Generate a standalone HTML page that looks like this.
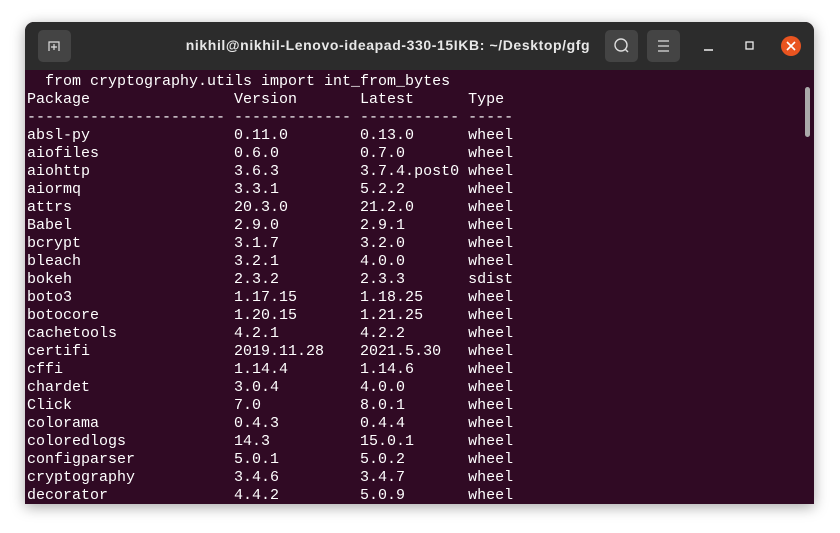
<!DOCTYPE html>
<html><head><style>
html,body{margin:0;padding:0;width:840px;height:533px;background:#fff;overflow:hidden}
.win{position:absolute;left:25px;top:22px;width:789px;height:482px;border-radius:9px 9px 0 0;overflow:hidden;box-shadow:0 3px 14px rgba(0,0,0,.35);background:#300a24}
.tb{position:absolute;left:0;top:0;width:100%;height:48px;background:#2c2c2c}
.btn{position:absolute;top:8px;width:33px;height:32px;border-radius:5px;background:#444}
.title{position:absolute;left:145px;width:436px;top:15px;text-align:center;color:#e8e8e8;font:bold 14px "Liberation Sans",sans-serif;letter-spacing:0.6px;white-space:nowrap}
pre{position:absolute;left:2px;top:51px;margin:0;font:15px/18px "Liberation Mono",monospace;color:#fff;letter-spacing:0}
.sb{position:absolute;left:780px;top:65px;width:5px;height:50px;border-radius:3px;background:#aaa}
</style></head><body>
<div class="win">
<div class="tb">
<div class="btn" style="left:13px"><svg width="33" height="32"><path d="M11 21V12h10v9M16 14v6M13 17h6" fill="none" stroke="#ddd" stroke-width="1.2"/></svg></div>
<div class="title">nikhil@nikhil-Lenovo-ideapad-330-15IKB: ~/Desktop/gfg</div>
<div class="btn" style="left:580px"><svg width="33" height="32"><circle cx="16" cy="15" r="6" fill="none" stroke="#ddd" stroke-width="1.4"/><path d="M20 19l3 3" stroke="#ddd" stroke-width="1.4"/></svg></div>
<div class="btn" style="left:622px"><svg width="33" height="32"><path d="M11 11h11M11 16h11M11 21h11" stroke="#ddd" stroke-width="1.2"/></svg></div>
<svg style="position:absolute;left:676px;top:14px" width="110" height="22"><path d="M3 14h9" stroke="#eee" stroke-width="1.5"/><rect x="45" y="6" width="7" height="7" fill="none" stroke="#eee" stroke-width="1.3"/><circle cx="90" cy="10" r="10" fill="#e95420"/><path d="M86 6l8 8M94 6l-8 8" stroke="#fff" stroke-width="1.6"/></svg>
</div>
<pre>  from cryptography.utils import int_from_bytes
Package                Version       Latest      Type
---------------------- ------------- ----------- -----
absl-py                0.11.0        0.13.0      wheel
aiofiles               0.6.0         0.7.0       wheel
aiohttp                3.6.3         3.7.4.post0 wheel
aiormq                 3.3.1         5.2.2       wheel
attrs                  20.3.0        21.2.0      wheel
Babel                  2.9.0         2.9.1       wheel
bcrypt                 3.1.7         3.2.0       wheel
bleach                 3.2.1         4.0.0       wheel
bokeh                  2.3.2         2.3.3       sdist
boto3                  1.17.15       1.18.25     wheel
botocore               1.20.15       1.21.25     wheel
cachetools             4.2.1         4.2.2       wheel
certifi                2019.11.28    2021.5.30   wheel
cffi                   1.14.4        1.14.6      wheel
chardet                3.0.4         4.0.0       wheel
Click                  7.0           8.0.1       wheel
colorama               0.4.3         0.4.4       wheel
coloredlogs            14.3          15.0.1      wheel
configparser           5.0.1         5.0.2       wheel
cryptography           3.4.6         3.4.7       wheel
decorator              4.4.2         5.0.9       wheel</pre>
<div class="sb"></div>
</div>
</body></html>
